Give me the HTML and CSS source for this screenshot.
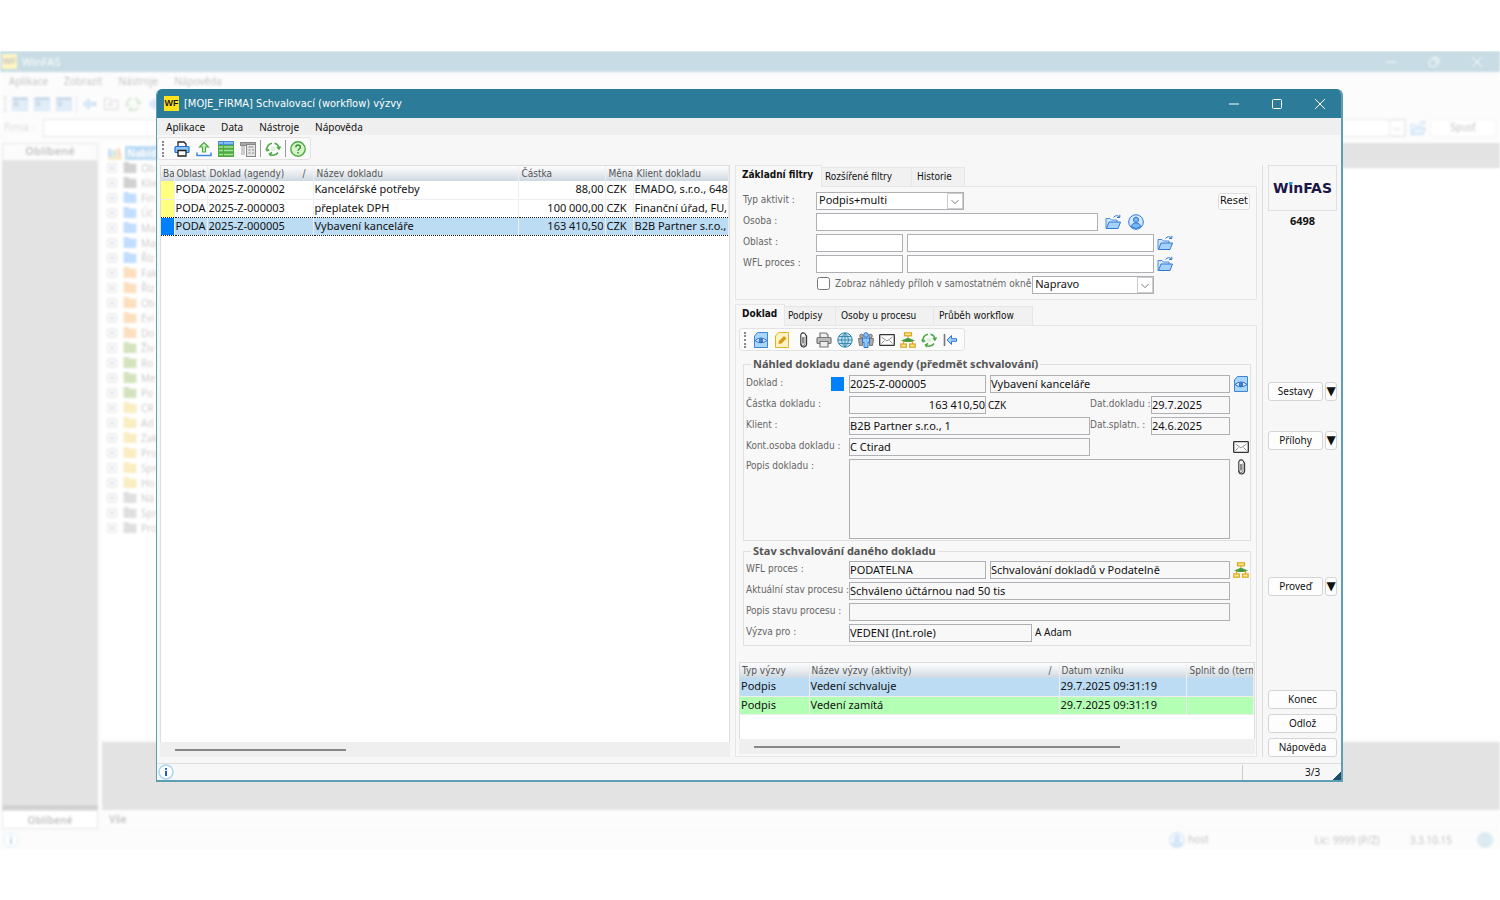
FILE: index.html
```html
<!DOCTYPE html>
<html lang="cs">
<head>
  <meta charset="UTF-8" />
  <title>WinFAS</title>
  <link rel="stylesheet" href="styles.css">
</head>
<body>
  <!-- icon set -->
  <svg class="sprite" aria-hidden="true">
    <symbol id="i-print" viewBox="0 0 16 16"><path d="M4 5V1h6l2 2v2" fill="#fff" stroke="#222" stroke-width="1.3"/><rect x="1" y="5.5" width="14" height="6" rx="1" fill="#8ec5f8" stroke="#1f6fd0" stroke-width="1.2"/><path d="M4 9.5h8V15H4z" fill="#fff" stroke="#222" stroke-width="1.3"/></symbol>
    <symbol id="i-print-gray" viewBox="0 0 16 16"><path d="M4 5V1h6l2 2v2" fill="#eee" stroke="#777" stroke-width="1.2"/><rect x="1" y="5.5" width="14" height="6" rx="1" fill="#bbb" stroke="#777" stroke-width="1.2"/><path d="M4 9.5h8V15H4z" fill="#eee" stroke="#777" stroke-width="1.2"/></symbol>
    <symbol id="i-upload" viewBox="0 0 16 16"><path d="M6.5 11V6H3.5L8 1.500 12.500 6h-3v5z" fill="#c8f0c0" stroke="#4da845" stroke-width="1.200"/><path d="M1 11.500V14.500h14V11.500" fill="none" stroke="#3c86dc" stroke-width="1.500"/></symbol>
    <symbol id="i-grid" viewBox="0 0 16 16"><rect y="0" width="16" height="4" fill="#4a8edb"/><rect y="4" width="16" height="12" fill="#4da845"/><path d="M1 2h4M6 2h9" stroke="#9ccbfa" stroke-width="1.500"/><path d="M1 6h4M6 6h9M1 9.500h4M6 9.500h9M1 13.500h4M6 13.500h9" stroke="#a8e592" stroke-width="1.500"/></symbol>
    <symbol id="i-form" viewBox="0 0 16 16"><rect x=".5" y="1.500" width="15" height="3" fill="#aaa" stroke="#888"/><path d="M1 5h4v9H1z" fill="#ccc"/><rect x="6.500" y="3.500" width="9" height="12" fill="#e4e4e4" stroke="#888"/><path d="M8.500 6h5M8.500 9h2M8.500 12h2M12 9h2M12 12h2" stroke="#888"/></symbol>
    <symbol id="i-refresh" viewBox="0 0 16 16"><g fill="none" stroke="#4da845" stroke-width="1.500"><path d="M2 9.500A6 6 0 0 1 7 2.200M9.500 2.200A6 6 0 0 1 14 7.500M13 11.500A6 6 0 0 1 4.500 13"/><path d="M.8 7.500L2.200 9.800 4.200 8.500M12 6l2 2 1.500-2.500M7 11.500L4.500 13 6 15"/></g><circle cx="8" cy="8" r="2.200" fill="#d9f5cf"/></symbol>
    <symbol id="i-help" viewBox="0 0 16 16"><circle cx="8" cy="8" r="7.200" fill="#d5f5c9" stroke="#4da845" stroke-width="1.400"/><path d="M5.800 6.300C5.800 3.300 10.400 3.300 10.400 6.200 10.400 8 8 8 8 9.800M8 11v1.600" fill="none" stroke="#3b8f37" stroke-width="1.500"/></symbol>
    <symbol id="i-folder" viewBox="0 0 16 16"><path d="M1 14.500V4.500h4l1.500 1.500H12v2" fill="#cfe6fd" stroke="#4a8edb"/><path d="M1.500 14.500L4 8h11.500l-2.500 6.500z" fill="#a5d2fb" stroke="#3077d0"/><path d="M8.500 3.500Q11.500 0 14.500 3M14.800 .8V3.500H12" fill="none" stroke="#3077d0"/></symbol>
    <symbol id="i-person" viewBox="0 0 16 16"><circle cx="8" cy="8" r="7.300" fill="#d4eafe" stroke="#3077d0"/><circle cx="8" cy="5.800" r="2.600" fill="#79b6f4" stroke="#3077d0"/><path d="M3.500 13q0-4 4.500-4t4.500 4Q8 16 3.500 13z" fill="#79b6f4" stroke="#3077d0"/></symbol>
    <symbol id="i-eye" viewBox="0 0 16 16"><path d="M1.500 15.500V4l3-3.500h10v15z" fill="#a9d5ff" stroke="#3c86dc"/><path d="M2 8.500Q8 3.500 14 8.500 8 13 2 8.500z" fill="#e7f4ff" stroke="#2d6ec8"/><circle cx="8" cy="8.500" r="1.800" fill="#3c86dc" stroke="#2458a8" stroke-width=".8"/></symbol>
    <symbol id="i-edit" viewBox="0 0 16 16"><path d="M1.500 15.500V4l3-3.500h10v15z" fill="#fff3c4" stroke="#e3b02a"/><path d="M4.500 12l.5-3 5-5 2.500 2.500-5 5z" fill="#d99a1a"/></symbol>
    <symbol id="i-clip" viewBox="0 0 16 16"><path d="M10 4.500v7a2 2 0 0 1-4 0" fill="none" stroke="#777"/><path d="M8 5v6.500M5.800 13V3.500a2.300 2.300 0 0 1 4.800-.5l1 1v8a3 3 0 0 1-5.800 1V3.500" fill="none" stroke="#333" stroke-width="1.100"/></symbol>
    <symbol id="i-globe" viewBox="0 0 16 16"><circle cx="8" cy="8" r="7.200" fill="#bfe3f8" stroke="#2f82a8"/><path d="M8 1v14M1 8h14M2 4.500h12M2 11.500h12M8 1Q1 8 8 15M8 1q7 7 0 14" fill="none" stroke="#2f82a8" stroke-width=".9"/></symbol>
    <symbol id="i-people" viewBox="0 0 16 16"><g fill="#aaa" stroke="#777"><circle cx="3.500" cy="4" r="1.800"/><circle cx="12.500" cy="4" r="1.800"/><path d="M.5 6.500h4v7h-3zM15.500 6.500h-4v7h3z"/></g><circle cx="8" cy="3" r="2.300" fill="#8cc6fa" stroke="#2f74cc"/><path d="M4.500 6h7v4.500h-1.500v5H6v-5H4.500z" fill="#8cc6fa" stroke="#2f74cc"/></symbol>
    <symbol id="i-mail" viewBox="0 0 16 16"><rect x=".7" y="2.700" width="14.600" height="10.600" rx=".6" fill="#fff" stroke="#333" stroke-width="1.300"/><path d="M2.500 5L8 9l5.500-4M2.500 11.500L5.500 8.500M13.500 11.500l-3-3" fill="none" stroke="#777" stroke-width=".8"/></symbol>
    <symbol id="i-flow" viewBox="0 0 16 16"><g fill="#ffe88a" stroke="#dba520" stroke-width="1.200"><rect x="4.500" y=".8" width="7" height="3"/><rect x=".8" y="12" width="5.500" height="3.200"/><rect x="9.700" y="12" width="5.500" height="3.200"/></g><path d="M8 4v2M3.500 12V9.500h9V12" fill="none" stroke="#dba520" stroke-width="1.200"/><path d="M1 8.500l4-1.500q3-2 6 0l4 1.500-4 1q-3 1-6 0z" fill="#3f9b3c"/></symbol>
    <symbol id="i-back" viewBox="0 0 16 16"><path d="M2.500 2v12" stroke="#777" stroke-width="1.600"/><path d="M14.500 6.700H9.500V3.500L5 8l4.500 4.500V9.300h5z" fill="#a5d2fb" stroke="#3077d0"/></symbol>
    <symbol id="i-arrow" viewBox="0 0 16 16"><path d="M15 6.500H8V3L2 8l6 5V9.500h7z" fill="#7db8f5" stroke="#3077d0"/></symbol>
    <symbol id="i-info" viewBox="0 0 16 16"><circle cx="8" cy="8" r="7" fill="#fff" stroke="#a9d5f8" stroke-width="1.500"/><path d="M8 4v1.800M8 6.800V12" stroke="#2060c8" stroke-width="2"/></symbol>
    <symbol id="i-dir" viewBox="0 0 14 12"><path d="M0 0h5l2 2h7v10H0z" fill="currentColor"/></symbol>
    <symbol id="i-plus" viewBox="0 0 10 10"><rect x="1" y="1" width="8" height="8" fill="#fff" stroke="#888"/><path d="M3 5h4M5 3v4" stroke="#3355aa"/></symbol>
    <symbol id="i-pane" viewBox="0 0 16 16"><rect x=".5" y="1.500" width="15" height="13" fill="#8dbbe8" stroke="#6aa0d8"/><path d="M1 3h14M2 6.500h4M2 9h4" stroke="#2c5f9a" stroke-width="2"/></symbol>
    <symbol id="i-up" viewBox="0 0 16 16"><path d="M1.500 13.500v-11h5l1 2h7v9z" fill="none" stroke="#777"/><path d="M6 11V7h4M6 7l4 4" fill="none" stroke="#777"/></symbol>
    <symbol id="i-books" viewBox="0 0 16 16"><path d="M1 3l4 2v9H1z" fill="#3b86d6"/><path d="M6 5h3v9H6z" fill="#46a046"/><path d="M10 3h3l2 11h-5z" fill="#e87a2a"/><path d="M1 12h14v3H1z" fill="#d8b03a"/></symbol>
    <symbol id="i-min" viewBox="0 0 12 12"><path d="M1 6h10" stroke="currentColor"/></symbol>
    <symbol id="i-max" viewBox="0 0 12 12"><rect x="1.500" y="1.500" width="9" height="9" rx="1" fill="none" stroke="currentColor"/></symbol>
    <symbol id="i-restore" viewBox="0 0 12 12"><rect x="1.500" y="3.500" width="7" height="7" rx="1" fill="none" stroke="currentColor"/><path d="M4 1.500h5q1.500 0 1.500 1.500v5" fill="none" stroke="currentColor"/></symbol>
    <symbol id="i-close" viewBox="0 0 12 12"><path d="M1 1l10 10M11 1L1 11" stroke="currentColor"/></symbol>
    <symbol id="i-chevron" viewBox="0 0 16 16"><path d="M4 7l4 4 4-4" fill="none" stroke="#666"/></symbol>
  </svg>

  <div class="desktop">
    <!-- main application window -->
    <div class="backdrop">
      <div class="bd-title"><span class="logo-mark">WF</span><span class="bd-name">WinFAS</span>
        <svg class="bd-win"><use href="#i-min"/></svg><svg class="bd-win"><use href="#i-restore"/></svg><svg class="bd-win"><use href="#i-close"/></svg>
      </div>
      <div class="bd-menu"><span>Aplikace</span><span>Zobrazit</span><span>Nástroje</span><span>Nápověda</span></div>
      <div class="bd-tools">
        <i class="grip"></i>
        <svg class="icon"><use href="#i-pane"/></svg><svg class="icon"><use href="#i-pane"/></svg><svg class="icon"><use href="#i-pane"/></svg>
        <i class="sep"></i>
        <svg class="icon"><use href="#i-arrow"/></svg><svg class="icon"><use href="#i-up"/></svg><svg class="icon"><use href="#i-refresh"/></svg><svg class="icon"><use href="#i-arrow"/></svg>
      </div>
      <div class="bd-firm"><label for="firm">Firma :</label>
        <span class="select grow"><select id="firm"><option></option></select><svg><use href="#i-chevron"/></svg></span>
        <svg class="icon"><use href="#i-folder"/></svg><button class="bd-run">Spusť</button>
      </div>
      <div class="bd-work">
        <div class="bd-fav">
          <div class="bd-favhead">Oblíbené</div>
          <div class="bd-gray"></div>
          <div class="bd-favline"></div>
          <button class="bd-favbtn">Oblíbené</button>
        </div>
        <div class="bd-right">
          <div class="bd-top">
            <ul class="tree" id="tree"><li class="root"><svg class="icon"><use href="#i-books"/></svg><b>Nabídka</b></li></ul>
            <div class="bd-content"><div class="bd-strip"></div></div>
          </div>
          <div class="bd-log"></div>
          <div class="bd-all">Vše</div>
        </div>
      </div>
      <div class="bd-status"><svg class="icon"><use href="#i-info"/></svg>
        <span class="bd-user"><svg class="icon"><use href="#i-person"/></svg>host</span><span class="bd-lic">Lic: 9999 (P/Z)</span><span class="bd-ver">3.3.10.15</span><svg class="icon"><use href="#i-globe"/></svg>
      </div>
    </div>

    <!-- workflow dialog -->
    <div class="dialog">
      <header class="titlebar">
        <span class="logo-mark">WF</span><h1>[MOJE_FIRMA] Schvalovací (workflow) výzvy</h1>
        <button aria-label="Minimalizovat"><svg><use href="#i-min"/></svg></button>
        <button aria-label="Maximalizovat"><svg><use href="#i-max"/></svg></button>
        <button aria-label="Zavřít"><svg><use href="#i-close"/></svg></button>
      </header>
      <nav class="menu"><a href="#">Aplikace</a><a href="#">Data</a><a href="#">Nástroje</a><a href="#">Nápověda</a></nav>
      <div class="toolbar toolbar-main">
        <i class="grip"></i>
        <button aria-label="Tisk"><svg><use href="#i-print"/></svg></button>
        <button aria-label="Export"><svg><use href="#i-upload"/></svg></button>
        <button aria-label="Tabulka"><svg><use href="#i-grid"/></svg></button>
        <button aria-label="Formulář"><svg><use href="#i-form"/></svg></button>
        <i class="sep"></i>
        <button aria-label="Obnovit"><svg><use href="#i-refresh"/></svg></button>
        <i class="sep"></i>
        <button aria-label="Nápověda"><svg><use href="#i-help"/></svg></button>
      </div>

      <main class="main">
        <section class="list">
          <div class="table-wrap">
            <table class="grid docs">
              <colgroup><col class="w-ba"><col class="w-obl"><col class="w-dok"><col class="w-naz"><col class="w-cas"><col class="w-men"><col></colgroup>
              <thead><tr><th>Ba</th><th>Oblast</th><th>Doklad (agendy)<span class="sort">/</span></th><th>Název dokladu</th><th>Částka</th><th class="tight">Měna</th><th>Klient dokladu</th></tr></thead>
              <tbody>
                <tr><td class="yellow"></td><td>PODA</td><td>2025-Z-000002</td><td>Kancelářské potřeby</td><td class="num">88,00</td><td>CZK</td><td>EMADO, s.r.o., 6483</td></tr>
                <tr class="before"><td class="yellow"></td><td>PODA</td><td>2025-Z-000003</td><td>přeplatek DPH</td><td class="num">100 000,00</td><td>CZK</td><td>Finanční úřad, FU, 1</td></tr>
                <tr class="selected"><td class="blue"></td><td>PODA</td><td>2025-Z-000005</td><td>Vybavení kanceláře</td><td class="num">163 410,50</td><td>CZK</td><td>B2B Partner s.r.o., 1</td></tr>
              </tbody>
            </table>
          </div>
          <div class="scrollbar"><div class="thumb thumb-list"></div></div>
        </section>

        <section class="detail">
          <div class="tabs"><button class="tab active tab-zak">Základní filtry</button><button class="tab tab-ext">Rozšířené filtry</button><button class="tab tab-his">Historie</button></div>
          <div class="panel filters">
            <div class="row"><label for="typ">Typ aktivit :</label><span class="select w-typ"><select id="typ"><option>Podpis+multi</option></select><svg><use href="#i-chevron"/></svg></span><button class="reset">Reset</button></div>
            <div class="row"><label for="osoba">Osoba :</label><input id="osoba" class="w-osoba"><button class="ib ib-gap" aria-label="Vybrat osobu"><svg><use href="#i-folder"/></svg></button><button class="ib ib-gap" aria-label="Přihlášená osoba"><svg><use href="#i-person"/></svg></button></div>
            <div class="row"><label for="obl">Oblast :</label><input id="obl" class="w-code"><input class="w-name" aria-label="Název oblasti"><button class="ib" aria-label="Vybrat oblast"><svg><use href="#i-folder"/></svg></button></div>
            <div class="row"><label for="wfl">WFL proces :</label><input id="wfl" class="w-code"><input class="w-name" aria-label="Název procesu"><button class="ib" aria-label="Vybrat proces"><svg><use href="#i-folder"/></svg></button></div>
            <div class="row row-check"><input type="checkbox" id="nahled"><label for="nahled">Zobraz náhledy příloh v samostatném okně</label><span class="select w-pos"><select aria-label="Umístění náhledu"><option>Napravo</option></select><svg><use href="#i-chevron"/></svg></span></div>
          </div>

          <div class="tabs tabs-doc"><button class="tab active tab-dok">Doklad</button><button class="tab tab-pod">Podpisy</button><button class="tab tab-oso">Osoby u procesu</button><button class="tab tab-pru">Průběh workflow</button></div>
          <div class="panel doc">
            <div class="toolbar toolbar-doc">
              <i class="grip"></i>
              <button aria-label="Náhled"><svg><use href="#i-eye"/></svg></button>
              <button aria-label="Upravit"><svg><use href="#i-edit"/></svg></button>
              <button aria-label="Přílohy"><svg><use href="#i-clip"/></svg></button>
              <button aria-label="Tisk"><svg><use href="#i-print-gray"/></svg></button>
              <button aria-label="Web"><svg><use href="#i-globe"/></svg></button>
              <button aria-label="Osoby"><svg><use href="#i-people"/></svg></button>
              <button aria-label="E-mail"><svg><use href="#i-mail"/></svg></button>
              <button aria-label="Workflow"><svg><use href="#i-flow"/></svg></button>
              <button aria-label="Obnovit"><svg><use href="#i-refresh"/></svg></button>
              <button aria-label="Zpět"><svg><use href="#i-back"/></svg></button>
            </div>

            <fieldset>
              <legend>Náhled dokladu dané agendy (předmět schvalování)</legend>
              <div class="row"><label for="d1">Doklad :</label><i class="flag"></i><div class="fields"><input id="d1" class="w-doc" readonly value="2025-Z-000005"><input class="grow" readonly aria-label="Název dokladu" value="Vybavení kanceláře"></div><button class="ib" aria-label="Zobrazit doklad"><svg><use href="#i-eye"/></svg></button></div>
              <div class="row"><label for="d2">Částka dokladu :</label><div class="fields"><input id="d2" class="w-doc num" readonly value="163 410,50"><span class="unit">CZK</span><label for="d3" class="date">Dat.dokladu :</label><input id="d3" class="w-date" readonly value="29.7.2025"></div></div>
              <div class="row"><label for="d4">Klient :</label><div class="fields"><input id="d4" class="w-klient" readonly value="B2B Partner s.r.o., 1"><label for="d5" class="date">Dat.splatn. :</label><input id="d5" class="w-date" readonly value="24.6.2025"></div></div>
              <div class="row"><label for="d6">Kont.osoba dokladu :</label><div class="fields"><input id="d6" class="w-klient" readonly value="C Ctirad"></div><button class="ib" aria-label="Napsat e-mail"><svg><use href="#i-mail"/></svg></button></div>
              <div class="row row-top"><label for="d7">Popis dokladu :</label><div class="fields"><textarea id="d7" readonly></textarea></div><button class="ib" aria-label="Přílohy dokladu"><svg><use href="#i-clip"/></svg></button></div>
            </fieldset>

            <fieldset>
              <legend>Stav schvalování daného dokladu</legend>
              <div class="row"><label for="s1">WFL proces :</label><div class="fields"><input id="s1" class="w-doc" readonly value="PODATELNA"><input class="grow" readonly aria-label="Název procesu" value="Schvalování dokladů v Podatelně"></div><button class="ib" aria-label="Schéma procesu"><svg><use href="#i-flow"/></svg></button></div>
              <div class="row"><label for="s2">Aktuální stav procesu :</label><div class="fields"><input id="s2" class="grow" readonly value="Schváleno účtárnou nad 50 tis"></div></div>
              <div class="row"><label for="s3">Popis stavu procesu :</label><div class="fields"><input id="s3" class="grow" readonly></div></div>
              <div class="row"><label for="s4">Výzva pro :</label><div class="fields"><input id="s4" class="w-vyzva" readonly value="VEDENI (Int.role)"><span class="who">A Adam</span></div></div>
            </fieldset>

            <div class="calls">
              <div class="table-wrap">
                <table class="grid">
                  <colgroup><col class="w-ctyp"><col class="w-cnaz"><col class="w-cdat"><col></colgroup>
                  <thead><tr><th>Typ výzvy</th><th>Název výzvy (aktivity)<span class="sort">/</span></th><th>Datum vzniku</th><th class="tight">Splnit do (term</th></tr></thead>
                  <tbody>
                    <tr class="current"><td>Podpis</td><td>Vedení schvaluje</td><td>29.7.2025 09:31:19</td><td></td></tr>
                    <tr class="green"><td>Podpis</td><td>Vedení zamítá</td><td>29.7.2025 09:31:19</td><td></td></tr>
                  </tbody>
                </table>
              </div>
              <div class="scrollbar"><div class="thumb thumb-calls"></div></div>
            </div>
          </div>
        </section>

        <aside class="side">
          <div class="brand"><span>WinFAS</span></div>
          <strong>6498</strong>
          <div class="split split-first"><button>Sestavy</button><button aria-label="Další sestavy">▼</button></div>
          <div class="split"><button>Přílohy</button><button aria-label="Další přílohy">▼</button></div>
          <div class="split split-run"><button>Proveď</button><button aria-label="Další akce">▼</button></div>
          <div class="actions"><button>Konec</button><button>Odlož</button><button>Nápověda</button></div>
        </aside>
      </main>

      <footer class="statusbar"><svg class="icon"><use href="#i-info"/></svg><span>3/3</span><i class="resize"></i></footer>
    </div>
  </div>

  <script>
    const tree = document.getElementById("tree");
    const items = [
      ["gray", "Ob"], ["gray", "Klie"], ["blue", "Fin"], ["blue", "Úč"], ["blue", "Ma"], ["blue", "Maj"], ["blue", "Říz"],
      ["orange", "Fak"], ["orange", "Říz"], ["orange", "Ob"], ["orange", "Evi"], ["orange", "Do"],
      ["green", "Živ"], ["green", "Ro"], ["green", "Me"], ["green", "Po"],
      ["yellow", "CR"], ["yellow", "Ad"], ["yellow", "Zak"], ["yellow", "Pro"], ["yellow", "Spr"], ["yellow", "Ho"],
      ["lines", "Ná"], ["lines", "Spr"], ["lines", "Pro"]
    ];
    items.forEach(([color, text]) => {
      const li = document.createElement("li");
      li.innerHTML = `<svg class="plus"><use href="#i-plus"/></svg><svg class="dir ${color}"><use href="#i-dir"/></svg>${text}`;
      tree.appendChild(li);
    });
  </script>
</body>
</html>
```

FILE: styles.css
```css
* { box-sizing: border-box; }
body {
  margin: 0;
  padding: 51px 0 50px;
  min-height: 100vh;
  display: flex;
  background: #fff;
  font-family: "Noto Sans", "Open Sans", sans-serif;
  font-size: 11px;
  line-height: 14px;
  color: #111;
}
button, input, select, textarea {
  font: inherit;
  color: inherit;
  margin: 0;
}
button { cursor: pointer; }
.sprite { position: absolute; width: 0; height: 0; }
.icon { width: 16px; height: 16px; flex: none; }
.grow { flex: 1; min-width: 0; }
.desktop { flex: 1; position: relative; display: flex; overflow: hidden; }

.logo-mark {
  width: 15px;
  height: 15px;
  background: #ffe11b;
  color: #1c1a2a;
  font: bold 9px/15px "Liberation Sans", sans-serif;
  text-align: center;
}
.grip { width: 2px; height: 16px; border-left: 2px dotted #888; flex: none; }
.sep { width: 1px; height: 17px; background: #999; flex: none; }

/* main window, faded behind the dialog */
.backdrop {
  flex: 1;
  display: flex;
  flex-direction: column;
  min-width: 0;
  background: #f4f4f4;
  opacity: .26;
  filter: blur(1px);
}
.bd-title {
  height: 21px;
  background: #2c7b99;
  color: #fff;
  display: flex;
  align-items: center;
  gap: 5px;
  padding: 0 17px 0 2px;
}
.bd-name { flex: 1; }
.bd-win { width: 12px; height: 12px; margin-left: 26px; }
.bd-menu { height: 20px; display: flex; align-items: center; gap: 16px; padding: 0 9px 2px; font-size: 10px; }
.bd-tools { height: 24px; display: flex; align-items: center; gap: 6px; padding-left: 4px; }
.bd-tools .sep { margin: 0 -2px; }
.bd-firm { height: 27px; display: flex; align-items: center; gap: 4px; padding: 0 4px 3px; font: 10px/14px "DejaVu Sans Condensed", sans-serif; }
.bd-firm label { width: 35px; color: #777; }
.bd-run { width: 66px; height: 18px; border: 1px solid #ddd; border-radius: 3px; background: #fff; }
.bd-work { flex: 1; display: flex; gap: 4px; }
.bd-fav { width: 98px; display: flex; flex-direction: column; padding-left: 2px; }
.bd-favhead { height: 18px; background: #f4f4f4; border: 1px solid #aaa; text-align: center; font-weight: bold; color: #333; }
.bd-gray { flex: 1; background: #979797; }
.bd-favline { height: 5px; background: #555; }
.bd-favbtn { height: 19px; border: 1px solid #aaa; background: #fff; font-weight: bold; font-size: 10px; padding: 0; color: #333; }
.bd-right { flex: 1; display: flex; flex-direction: column; min-width: 0; }
.bd-top { flex: 1; display: flex; gap: 4px; }
.tree { width: 260px; margin: 0; padding: 2px 0 0 5px; list-style: none; background: #fff; }
.tree li { height: 15px; display: flex; align-items: center; gap: 4px; font-size: 10px; color: #333; }
.tree .root { gap: 2px; }
.tree b { background: #0078d7; color: #fff; width: 60px; padding-left: 2px; }
.plus { width: 10px; height: 10px; margin-right: 2px; }
.dir { width: 14px; height: 11px; }
.dir.gray { color: #525252; }
.dir.blue { color: #1480ff; }
.dir.orange { color: #f7880d; }
.dir.green { color: #5e9309; }
.dir.yellow { color: #ecbe14; }
.dir.lines { color: #888; }
.bd-content { flex: 1; background: #fff; }
.bd-strip { height: 25px; background: #979797; border-bottom: 1px solid #888; }
.bd-log { height: 72px; background: #979797; border-top: 4px solid #f4f4f4; }
.bd-all { height: 19px; padding: 2px 7px; font-size: 10px; font-weight: bold; color: #333; }
.bd-status { height: 21px; display: flex; align-items: center; padding: 0 7px 0 3px; border-top: 1px solid #eee; font-size: 10px; }
.bd-user { margin-left: auto; display: flex; gap: 3px; }
.bd-lic { margin-left: 106px; }
.bd-ver { margin: 0 25px 0 30px; }

/* dialog window */
.dialog {
  position: absolute;
  inset: 38px 157px 68px 156px;
  display: flex;
  flex-direction: column;
  background: #f7f7f7;
  border: 1px solid #5f9db3;
  border-width: 0 2px 2px 1px;
  border-radius: 6px 6px 0 0;
  overflow: hidden;
}
.titlebar { height: 29px; flex: none; background: #2c7b99; color: #fff; display: flex; align-items: center; padding-left: 7px; }
.titlebar h1 { flex: 1; margin: 0 0 0 5px; font: 11px/14px "DejaVu Sans Condensed", sans-serif; }
.titlebar button { width: 43px; height: 28px; border: 0; background: none; padding: 0; display: grid; place-items: center; }
.titlebar svg { width: 12px; height: 12px; }
.menu { height: 17px; flex: none; background: #efefef; display: flex; align-items: center; gap: 16px; padding: 0 9px; }
.menu a { color: #111; text-decoration: none; font-size: 10px; }
.toolbar {
  display: flex;
  align-items: center;
  align-self: flex-start;
  height: 23px;
  flex: none;
  padding: 0 4px;
  border: 1px solid #e2e2e2;
  border-radius: 3px;
  background: #fbfbfb;
}
.toolbar button { width: 22px; height: 20px; padding: 0; border: 0; background: none; display: grid; place-items: center; }
.toolbar svg { width: 16px; height: 16px; }
.toolbar .sep { margin: 0 1px; }
.toolbar-main { margin-top: 2px; padding-right: 1px; }
.toolbar-main .grip { margin-right: 7px; }
.toolbar-doc .grip { margin-right: 4px; }
.toolbar-doc button { width: 21px; }

.main { flex: 1; display: flex; gap: 5px; padding: 5px 4px 6px 3px; min-height: 0; }
.list { flex: 1; min-width: 0; display: flex; flex-direction: column; }
.table-wrap { flex: 1; background: #fff; border: 1px solid #ddd; border-bottom: 0; overflow: hidden; }
.grid { width: 100%; table-layout: fixed; border-collapse: collapse; }
.grid th {
  height: 15px;
  padding: 0 2px;
  background: linear-gradient(#fdfdfd, #e8ecf0 50%, #cdd8e1);
  border-right: 1px solid #eee;
  text-align: left;
  font: 10px/14px "DejaVu Sans Condensed", sans-serif;
  color: #555;
  white-space: nowrap;
  overflow: hidden;
}
.grid td { height: 18px; padding: 0 1px 1px; border: 1px solid #eee; border-width: 0 1px 1px 0; white-space: nowrap; overflow: hidden; }
.grid th:nth-child(n+4) { padding-left: 3px; }
.grid .tight { padding: 0; }
.sort { float: right; margin-right: 5px; }
.num { text-align: right; }
td.yellow { background: #ffff80; }
td.blue { background: #0080ff; }
.before td { border-bottom: 1px dotted #222; }
.selected td { background-color: #bcdcf4; border-bottom: 1px dotted #222; }
.selected td.blue { background-color: #0080ff; }
.current td { background: #bcdcf4; }
.green td { background: #b3ffb3; }
.w-ba { width: 13px; }
.w-obl { width: 33px; }
.w-dok { width: 106px; }
.w-naz { width: 205px; }
.w-cas { width: 87px; }
.w-men { width: 28px; }
.scrollbar { height: 15px; flex: none; background: #efefef; padding-top: 7px; }
.thumb { height: 2px; background: #888; }
.thumb-list { width: 30%; margin-left: 15px; }
.thumb-calls { width: 71%; margin-left: 15px; }

/* filters and document detail */
.detail { flex: 0 0 521px; display: flex; flex-direction: column; }
.tabs { height: 21px; flex: none; display: flex; align-items: flex-end; }
.tab {
  height: 19px;
  padding: 0 5px;
  border: 1px solid #e6e6e6;
  border-width: 1px 1px 0 0;
  background: #f1f1f1;
  font: 10px/14px "DejaVu Sans Condensed", sans-serif;
  text-align: left;
}
.tab.active { height: 22px; margin-bottom: -1px; padding: 0 6px 3px; border-left-width: 1px; background: #f8f8f8; font-weight: bold; z-index: 1; }
.tab-zak { width: 87px; }
.tab-ext { width: 90px; padding-left: 3px; }
.tab-his { width: 53px; }
.tab-dok { width: 50px; }
.tab-pod { width: 51px; padding-left: 3px; }
.tab-oso { width: 98px; }
.tab-pru { width: 99px; }
.tabs-doc { height: 22px; margin-top: 3px; }
.panel { border: 1px solid #e6e6e6; background: #f8f8f8; }
.filters { padding: 5px 6px 5px 7px; height: 114px; flex: none; display: flex; flex-direction: column; gap: 3px; }
.row { display: flex; align-items: center; min-height: 18px; }
label { font: 10px/14px "DejaVu Sans Condensed", sans-serif; color: #666; }
.row > label { width: 73px; padding-bottom: 3px; white-space: nowrap; }
input, textarea, select { height: 18px; padding: 0 0 2px; border: 1px solid #aeb0b4; border-radius: 0; background: #fff; }
input[readonly], textarea[readonly] { background: #f8f8f8; }
.w-osoba { width: 282px; }
.w-code { width: 87px; margin-right: 4px; }
.w-name { width: 247px; }
.select { position: relative; display: flex; }
.select select { width: 100%; appearance: none; padding-left: 2px; }
.select svg { position: absolute; right: 1px; top: 1px; width: 16px; height: 16px; border: 1px solid #ccc; pointer-events: none; }
.w-typ { width: 148px; }
.w-pos { width: 122px; }
.reset { margin-left: auto; height: 17px; padding: 0 1px; border: 1px solid #ddd; border-radius: 3px; background: #fdfdfd; font: 10px/14px "DejaVu Sans", sans-serif; }
.ib { width: 16px; height: 16px; margin-left: 3px; padding: 0; border: 0; background: none; flex: none; }
.ib svg { width: 16px; height: 16px; display: block; }
.ib-gap { margin-left: 7px; }
.row-check { padding-left: 74px; }
.row-check input { width: 13px; height: 13px; margin-bottom: 4px; }
.row-check label { width: auto; margin-left: 5px; }
.row-check .select { margin-left: 1px; }

.doc { flex: 1; padding: 2px 1px 2px 3px; display: flex; flex-direction: column; }
fieldset { margin: 6px 4px 0; padding: 4px 1px 1px 2px; border: 1px solid #e0e0e0; min-width: 0; }
fieldset + fieldset { margin-top: 3px; padding: 3px 1px 3px 2px; }
legend { margin-left: 5px; padding: 0 2px; font-weight: bold; color: #555; }
fieldset .row + .row { margin-top: 3px; }
fieldset .row > label { width: auto; flex: 0 0 103px; }
.flag { width: 13px; height: 14px; margin: 0 5px 0 -18px; background: #0080ff; }
.fields { flex: 0 0 381px; display: flex; align-items: center; }
.w-doc { width: 137px; margin-right: 4px; }
.w-doc.num { margin-right: 2px; }
.w-date { width: 79px; }
.w-klient { width: 241px; }
.w-vyzva { width: 183px; }
.date { width: 61px; margin-left: auto; white-space: nowrap; padding-bottom: 2px; }
.unit, .who { font-size: 10px; }
.who { margin-left: 3px; padding-bottom: 2px; }
.row-top { align-items: flex-start; }
textarea { flex: 1; height: 80px; resize: none; display: block; }
.calls { flex: 1; margin-top: 16px; display: flex; flex-direction: column; }
.w-ctyp { width: 69px; }
.w-cnaz { width: 250px; }
.w-cdat { width: 127px; }

.side { flex: 0 0 75px; border-left: 1px solid #ddd; padding-left: 5px; display: flex; flex-direction: column; }
.brand { height: 46px; border: 1px solid #e0e0e0; display: grid; place-items: center; }
.brand span { position: relative; font: bold 14px/16px "DejaVu Sans", sans-serif; color: #1b1446; }
.brand span::after { content: ""; position: absolute; left: 16px; top: 2px; width: 3px; height: 3px; background: #2e9bd6; }
.side strong { text-align: center; margin-top: 3px; }
.side button { height: 19px; padding: 0 0 1px; border: 1px solid #d4d4d4; border-radius: 3px; background: #fdfdfd; font-size: 10px; }
.split { display: flex; gap: 2px; margin-top: 30px; }
.split button:first-child { flex: 1; }
.split button:last-child { width: 12px; font: 12px/14px "DejaVu Sans", sans-serif; }
.split-first { margin-top: 154px; }
.split-run { margin-top: 127px; }
.actions { margin-top: auto; display: flex; flex-direction: column; gap: 5px; }
.statusbar { position: relative; height: 17px; flex: none; border-top: 1px solid #ddd; display: flex; align-items: center; padding-left: 1px; }
.statusbar span { margin-left: auto; width: 99px; height: 15px; padding-left: 62px; border-left: 1px solid #ccc; font-size: 10px; }
.resize { position: absolute; right: 0; bottom: 0; width: 8px; height: 8px; background: linear-gradient(135deg, transparent 50%, #1f4e6b 50%); }
```
